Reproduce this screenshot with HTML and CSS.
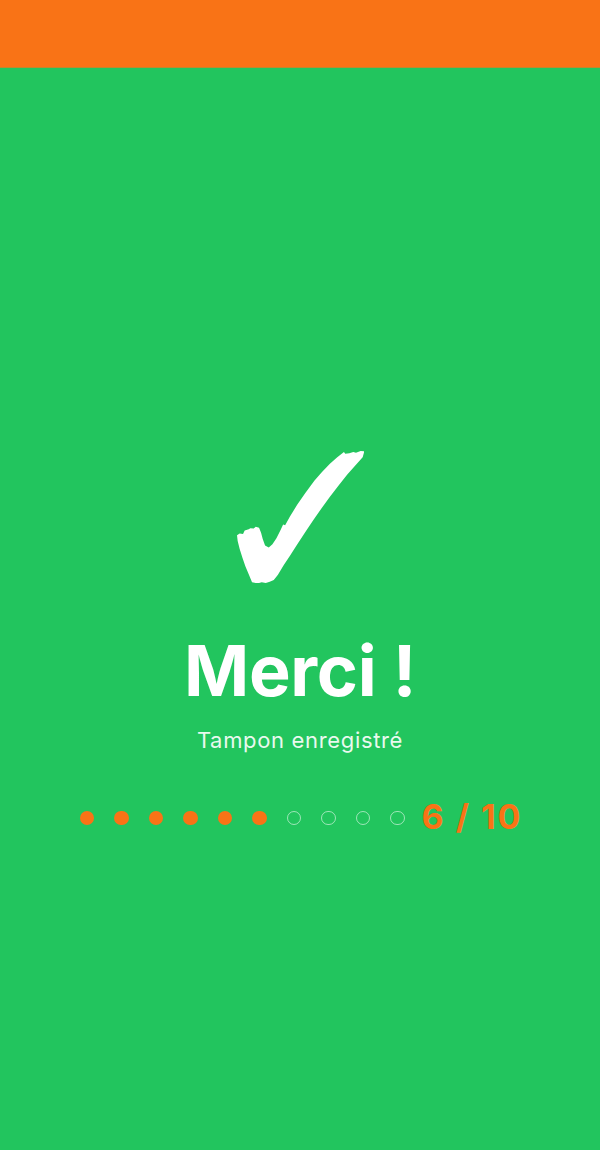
FILE: index.html
```html
<!DOCTYPE html>
<html lang="fr">
<head>
    <meta charset="UTF-8">
    <meta name="viewport" content="width=device-width, initial-scale=1.0">
    <title>Merci</title>
    <link rel="stylesheet" href="styles.css">
</head>

<body>
  <div class="top_bar"></div>

  <main class="thanks">
    <svg class="check" viewBox="110 65 380 395" aria-hidden="true">
      <path d="M110 317 L118 312 L128 313 L133 303 L145 299 L150 296 L160 297 L166 292 L176 295 L182 310 L187 328 L194 348 L205 354 L216 344 L228 326 L240 302 L248 285 L254 287 L268 262 L290 226 L315 190 L342 153 L365 127 L388 103 L410 84 L430 68 L434 73 L446 72 L458 68 L466 70 L480 65 L491 66 L486 84 L466 106 L440 135 L414 168 L388 202 L362 238 L338 272 L314 308 L290 345 L268 379 L250 406 L232 436 L220 451 L208 456 L196 460 L184 458 L172 461 L155 458 L146 436 L135 410 L126 384 L118 358 L112 334 Z" fill="#fff"/>
    </svg>
    <h1 class="title">Merci !</h1>
    <p class="subtitle">Tampon enregistré</p>

    <div class="progress">
      <div class="dots">
        <span class="dot dot_on"></span>
        <span class="dot dot_on"></span>
        <span class="dot dot_on"></span>
        <span class="dot dot_on"></span>
        <span class="dot dot_on"></span>
        <span class="dot dot_on"></span>
        <span class="dot"></span>
        <span class="dot"></span>
        <span class="dot"></span>
        <span class="dot"></span>
      </div>
      <span class="count">6 / 10</span>
    </div>
  </main>
</body>
</html>
```

FILE: styles.css
```css
* { box-sizing: border-box; }

body { margin: 0; height: 1150px; display: flex; flex-direction: column; background: #22c55e; color: #fff; font-family: Inter, "Liberation Sans", sans-serif; overflow: hidden; }

.top_bar { height: 68px; background: #f97316; border-bottom: 1px solid #bd8a2c; }

.thanks { flex-grow: 1; display: flex; flex-direction: column; align-items: center; padding-top: 383px; }

.check { display: block; width: 127px; height: 132px; }

.title { margin: 48px 0 0; font-size: 70px; line-height: 80px; font-weight: 700; letter-spacing: -0.3px; }
.subtitle { margin: 13px 0 0; font-size: 22px; line-height: 32px; letter-spacing: 0.66px; opacity: 0.9; }

.progress { display: flex; align-items: center; gap: 17px; margin: 42px 0 0 2px; }
.dots { display: flex; gap: 20px; margin-top: 2px; }
.dot { width: 14.5px; height: 14.5px; border-radius: 50%; border: 1.5px solid rgba(255, 255, 255, 0.55); }
.dot_on { background: #f97316; border: none; }
.count { font-size: 34px; line-height: 38px; font-weight: 700; letter-spacing: 2px; color: #f97316; }
```
